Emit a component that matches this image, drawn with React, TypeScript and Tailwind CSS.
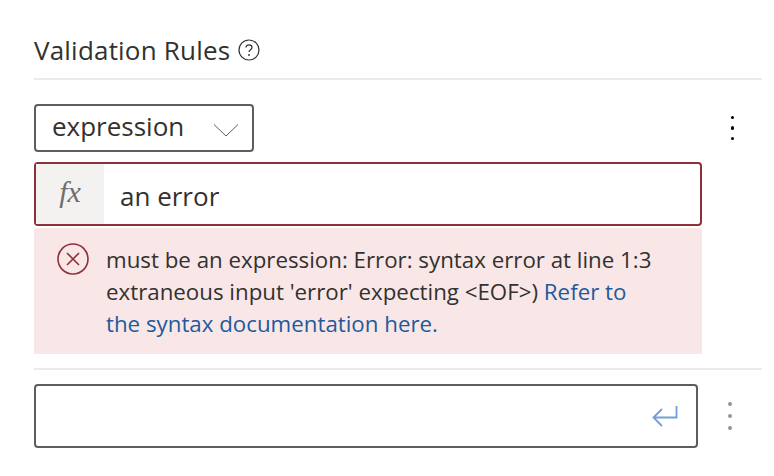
import React from 'react';

const font = "[font-family:'Open_Sans','Noto_Sans',sans-serif]";

function Dots({ className, dot }: { className: string; dot: string }) {
  return (
    <div className={`flex flex-col items-center ${className}`}>
      <span className={`block rounded-full bg-current ${dot}`} />
      <span className={`block rounded-full bg-current ${dot}`} />
      <span className={`block rounded-full bg-current ${dot}`} />
    </div>
  );
}

export default function App() {
  return (
    <div className={`w-[774px] h-[476px] bg-white pl-[34px] pr-3 pt-[30px] overflow-hidden text-[#323130] ${font}`}>
      {/* Header */}
      <div className="h-[50px] border-b-2 border-[#edebe9] flex items-start">
        <span className="text-[26px] leading-[40px] tracking-[0.2px]">Validation Rules</span>
        <svg className="ml-2 mt-[9px]" width="22" height="22" viewBox="0 0 22 22" fill="none">
          <circle cx="11" cy="11" r="10" stroke="#323130" strokeWidth="1.2" />
          <path d="M8 8.6c0-1.7 1.3-2.8 3-2.8s3 1.1 3 2.6c0 2.2-3 2.4-3 4.7" stroke="#323130" strokeWidth="1.2" />
          <circle cx="11" cy="16" r="0.9" fill="#323130" />
        </svg>
      </div>

      {/* Type select row */}
      <div className="mt-6 flex items-center justify-between pr-[28px]">
        <div className="w-[220px] h-[48px] border-2 border-[#605e5c] rounded-[4px] flex items-center justify-between pl-4 pr-[13px]">
          <span className="text-[26px] leading-none -mt-1">expression</span>
          <svg width="26" height="14" viewBox="0 0 26 14" fill="none" className="mt-1">
            <path d="M1 1.5l12 11.5L25 1.5" stroke="#605e5c" strokeWidth="1" />
          </svg>
        </div>
        <Dots className="gap-[7px] text-black" dot="w-[3.5px] h-[3.5px]" />
      </div>

      {/* Expression input */}
      <div className="mt-[10px] w-[668px] h-[64px] border-2 border-[#8e3039] rounded-[4px] flex items-stretch">
        <div className="w-[68px] bg-[#f3f2f1] flex items-center justify-center">
          <span className="text-[30px] leading-none italic text-[#706e6c] [font-family:'Liberation_Serif',serif] -mt-1">fx</span>
        </div>
        <span className="pl-4 text-[26px] leading-[64px] -mt-[0.5px]">an error</span>
      </div>

      {/* Error message */}
      <div className="mt-[2px] w-[668px] h-[126px] bg-[#f9e7e7] flex items-start pl-[23px] pt-4">
        <svg className="-mt-[1px] shrink-0" width="32" height="32" viewBox="0 0 32 32" fill="none">
          <circle cx="16" cy="16" r="15" stroke="#8e3039" strokeWidth="1.6" />
          <path d="M10 10l12 12M22 10L10 22" stroke="#8e3039" strokeWidth="1.6" />
        </svg>
        <p className="ml-[17px] text-[22.3px] leading-[32px] w-[560px]">
          must be an expression: Error: syntax error at line 1:3 extraneous input 'error' expecting &lt;EOF&gt;){' '}
          <a className="text-[#215a9c]">Refer to the syntax documentation here.</a>
        </p>
      </div>

      <div className="mt-[14px] border-t-2 border-[#edebe9]" />

      {/* New rule input */}
      <div className="mt-[14px] flex items-center">
        <div className="w-[664px] h-[64px] border-2 border-[#605e5c] rounded-[4px] flex items-center justify-end pr-[18px]">
          <svg width="26" height="22" viewBox="0 0 26 22" fill="none">
            <path d="M24.5 1v11.5H2M10 4l-8.5 8.5L10 21" stroke="#6f9fdc" strokeWidth="1.8" />
          </svg>
        </div>
        <Dots className="ml-[30px] gap-2 text-[#979593]" dot="w-1 h-1" />
      </div>
    </div>
  );
}
